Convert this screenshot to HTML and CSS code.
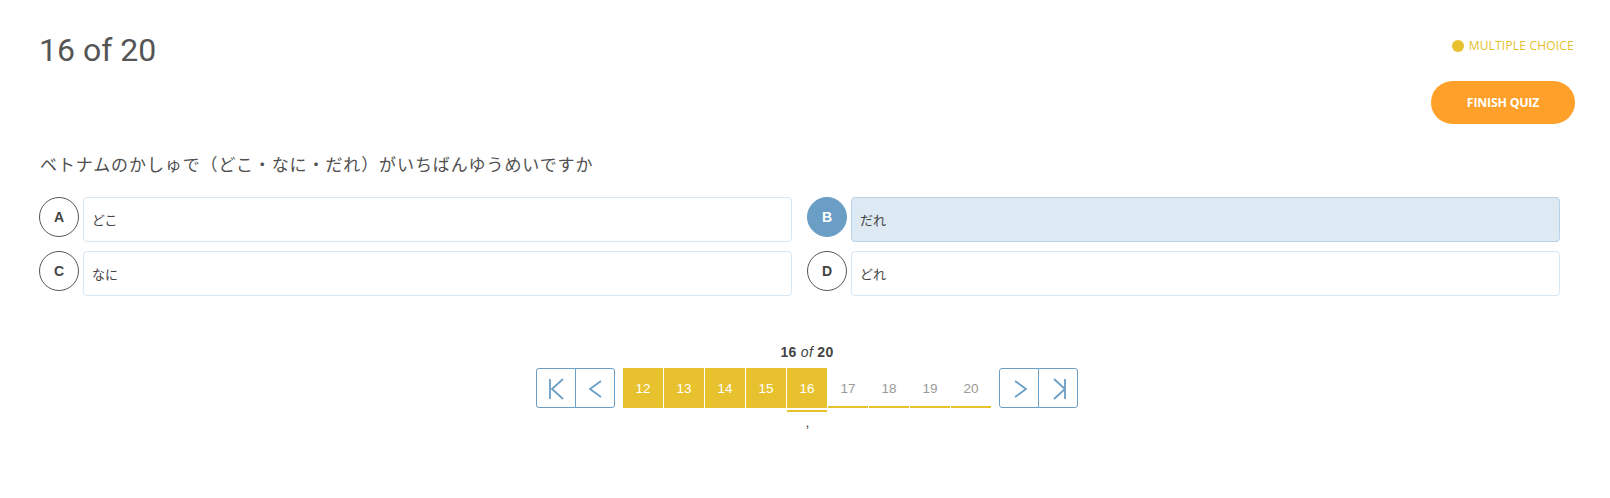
FILE: index.html
```html
<!DOCTYPE html>
<html lang="ja">
<head>
<meta charset="utf-8">
<title>Quiz</title>
<link rel="stylesheet" href="styles.css">
</head>
<body>
<div class="page">
  <header class="top">
    <h1 class="title">16 of 20</h1>
    <div class="top-right">
      <div class="tag"><span class="tag-dot"></span>MULTIPLE CHOICE</div>
      <button class="finish">FINISH QUIZ</button>
    </div>
  </header>

  <p class="question">ベトナムのかしゅで（どこ・なに・だれ）がいちばんゆうめいですか</p>

  <div class="options">
    <div class="option">
      <span class="letter">A</span>
      <div class="answer">どこ</div>
    </div>
    <div class="option selected">
      <span class="letter">B</span>
      <div class="answer">だれ</div>
    </div>
    <div class="option">
      <span class="letter">C</span>
      <div class="answer">なに</div>
    </div>
    <div class="option">
      <span class="letter">D</span>
      <div class="answer">どれ</div>
    </div>
  </div>

  <div class="pager">
    <div class="pager-label"><b>16</b> <i>of</i> <b>20</b></div>
    <div class="pager-row">
      <div class="nav">
        <span class="nav-btn"><svg viewBox="0 0 38 38" width="38" height="38"><path d="M13 10v20M26 10l-11 10 11 10" fill="none" stroke="#6b9ec4" stroke-width="1.8"/></svg></span>
        <span class="nav-btn"><svg viewBox="0 0 38 38" width="38" height="38"><path d="M25 12l-11 8 11 8" fill="none" stroke="#6b9ec4" stroke-width="1.8"/></svg></span>
      </div>
      <div class="pages">
        <span class="pg done">12</span>
        <span class="pg done">13</span>
        <span class="pg done">14</span>
        <span class="pg done">15</span>
        <span class="pg done active">16</span>
        <span class="pg">17</span>
        <span class="pg">18</span>
        <span class="pg">19</span>
        <span class="pg">20</span>
      </div>
      <div class="nav">
        <span class="nav-btn"><svg viewBox="0 0 38 38" width="38" height="38"><path d="M15 12l11 8-11 8" fill="none" stroke="#6b9ec4" stroke-width="1.8"/></svg></span>
        <span class="nav-btn"><svg viewBox="0 0 38 38" width="38" height="38"><path d="M26 10v20M15 10l11 10-11 10" fill="none" stroke="#6b9ec4" stroke-width="1.8"/></svg></span>
      </div>
    </div>
    <div class="pager-note">,</div>
  </div>
</div>
</body>
</html>
```

FILE: styles.css
```css
* { box-sizing: border-box; }

html, body {
  margin: 0;
  background: #ffffff;
}

.page {
  padding: 34px 35px 0 39px;
  font-family: "Liberation Sans", Arial, sans-serif;
  color: #555555;
}

.top {
  display: flex;
  justify-content: space-between;
  align-items: flex-start;
}

.title {
  margin: 0;
  font-family: Roboto, "Liberation Sans", sans-serif;
  font-weight: 400;
  font-size: 32px;
  line-height: 32px;
  color: #555555;
}

.top-right {
  display: flex;
  flex-direction: column;
  align-items: flex-end;
}

.tag {
  display: flex;
  align-items: center;
  margin-top: 4px;
  height: 16px;
  font-family: "Open Sans", sans-serif;
  font-size: 12px;
  letter-spacing: 0.2px;
  line-height: 16px;
  color: #e6bf2c;
  margin-right: 1px;
}

.tag-dot {
  width: 12px;
  height: 12px;
  border-radius: 50%;
  background: #e8c12f;
  margin-right: 5px;
}

.finish {
  margin-top: 27px;
  width: 144px;
  height: 43px;
  border: none;
  border-radius: 22px;
  background: #ffa02a;
  color: #ffffff;
  font-family: "Open Sans", sans-serif;
  font-weight: 700;
  font-size: 12.3px;
  letter-spacing: -0.2px;
  padding: 0;
}

.question {
  margin: 28px 0 0 1px;
  font-family: "Noto Sans CJK JP", sans-serif;
  font-size: 17px;
  letter-spacing: 0.9px;
  line-height: 24px;
  color: #505050;
}

.options {
  margin-top: 21px;
  display: grid;
  grid-template-columns: 1fr 1fr;
  row-gap: 9px;
}

.option {
  display: flex;
  align-items: flex-start;
  gap: 4px;
  padding-right: 15px;
}

.letter {
  flex: none;
  width: 40px;
  height: 40px;
  border: 1px solid #555555;
  border-radius: 50%;
  display: flex;
  align-items: center;
  justify-content: center;
  font-family: "Liberation Sans", Arial, sans-serif;
  font-weight: 700;
  font-size: 14px;
  color: #444444;
}

.answer {
  flex: 1;
  height: 45px;
  display: flex;
  align-items: center;
  padding-left: 8px;
  border: 1px solid #d6e6f2;
  border-radius: 4px;
  background: #ffffff;
  font-family: "Noto Sans CJK JP", sans-serif;
  font-size: 13px;
  color: #444444;
}

.selected .letter {
  background: #6b9ec5;
  border-color: #6b9ec5;
  color: #ffffff;
}

.selected .answer {
  background: #dde9f3;
  border-color: #bad2e6;
}

.pager {
  margin-top: 49px;
  display: flex;
  flex-direction: column;
  align-items: center;
}

.pager-label {
  font-size: 14px;
  letter-spacing: 0.3px;
  line-height: 15px;
  color: #444444;
}

.pager-row {
  margin-top: 8px;
  display: flex;
  gap: 8px;
}

.nav {
  display: flex;
}

.nav-btn {
  width: 40px;
  height: 40px;
  border: 1px solid #6b9ec4;
  display: flex;
  background: #ffffff;
}

.nav-btn + .nav-btn {
  margin-left: -1px;
}

.nav-btn:first-child {
  border-radius: 3px 0 0 3px;
}

.nav-btn:last-child {
  border-radius: 0 3px 3px 0;
}

.pages {
  display: flex;
  gap: 1px;
}

.pg {
  width: 40px;
  height: 40px;
  display: flex;
  align-items: center;
  justify-content: center;
  border-bottom: 2px solid #e8c12f;
  padding-top: 2px;
  font-size: 13.5px;
  color: #9a9a9a;
}

.pg.done {
  background: #e8c12f;
  color: #ffffff;
}

.pg.active {
  box-shadow: 0 2px 0 #ffffff, 0 4px 0 #e8c12f;
}

.pager-note {
  margin-top: 7px;
  font-size: 14px;
  line-height: 15px;
  color: #444444;
  padding-left: 1px;
}
```
